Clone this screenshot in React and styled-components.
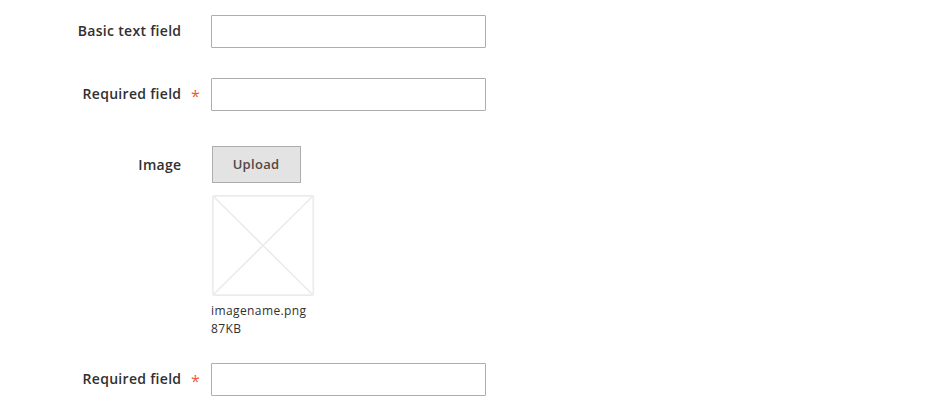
import React from 'react';
import styled, { createGlobalStyle } from 'styled-components';

const GlobalStyle = createGlobalStyle`
  *, *::before, *::after { box-sizing: border-box; }
  body { margin: 0; background: #fff; font-family: 'Open Sans', sans-serif; color: #303030; }
`;

const Form = styled.form`
  height: 408px;
  padding-top: 15px;
  overflow: hidden;
`;

const Field = styled.div`
  display: grid;
  grid-template-columns: 181px 30px 275px;
  height: ${(p) => p.$height || 33}px;
  margin-bottom: ${(p) => p.$gap || 0}px;
`;

const Label = styled.label`
  text-align: right;
  font-size: 14px;
  line-height: 31px;
  font-weight: 600;
  letter-spacing: 0.3px;
  margin-right: -0.4px;
  white-space: nowrap;
  padding-top: ${(p) => p.$offset || 0}px;
`;

const Required = styled.span`
  color: #f15a36;
  font-size: 16px;
  line-height: 37px;
  padding-left: 10px;
`;

const Input = styled.input`
  width: 275px;
  height: 33px;
  padding: 0 10px;
  border: 1px solid #adadad;
  border-radius: 1px;
  background: #fff;
  font: 14px 'Open Sans', sans-serif;
  outline: none;
`;

const Uploader = styled.div`
  display: flex;
  flex-direction: column;
  align-items: flex-start;
`;

const UploadButton = styled.button`
  width: 89px;
  height: 37px;
  margin: 0 0 12px 1px;
  padding: 0 1px 2px 0;
  border: 1px solid #adadad;
  background: #e3e3e3;
  color: #514943;
  font: 600 13px 'Open Sans', sans-serif;
  letter-spacing: 0.3px;
`;

const Placeholder = styled.svg`
  display: block;
  width: 103px;
  height: 101px;
  margin-left: 1px;
`;

const FileInfo = styled.div`
  margin-top: 6px;
  font-size: 12px;
  line-height: 18px;
  letter-spacing: 0.4px;
`;

function TextField({ label, required, gap }) {
  return (
    <Field $gap={gap}>
      <Label>{label}</Label>
      <Required>{required ? '*' : ''}</Required>
      <Input type="text" aria-label={label} />
    </Field>
  );
}

export default function App() {
  return (
    <>
      <GlobalStyle />
      <Form>
        <TextField label="Basic text field" gap={30} />
        <TextField label="Required field" required gap={35} />
        <Field $height={217}>
          <Label $offset={3}>Image</Label>
          <span />
          <Uploader>
            <UploadButton type="button">Upload</UploadButton>
            <Placeholder viewBox="0 0 103 101" fill="none" stroke="#ebebeb" strokeWidth="1.6">
              <rect x="0.9" y="0.9" width="100.4" height="99.2" rx="1" />
              <path d="M1 1L101 100M101 1L1 100" />
            </Placeholder>
            <FileInfo>
              <div>imagename.png</div>
              <div>87KB</div>
            </FileInfo>
          </Uploader>
        </Field>
        <TextField label="Required field" required />
      </Form>
    </>
  );
}
